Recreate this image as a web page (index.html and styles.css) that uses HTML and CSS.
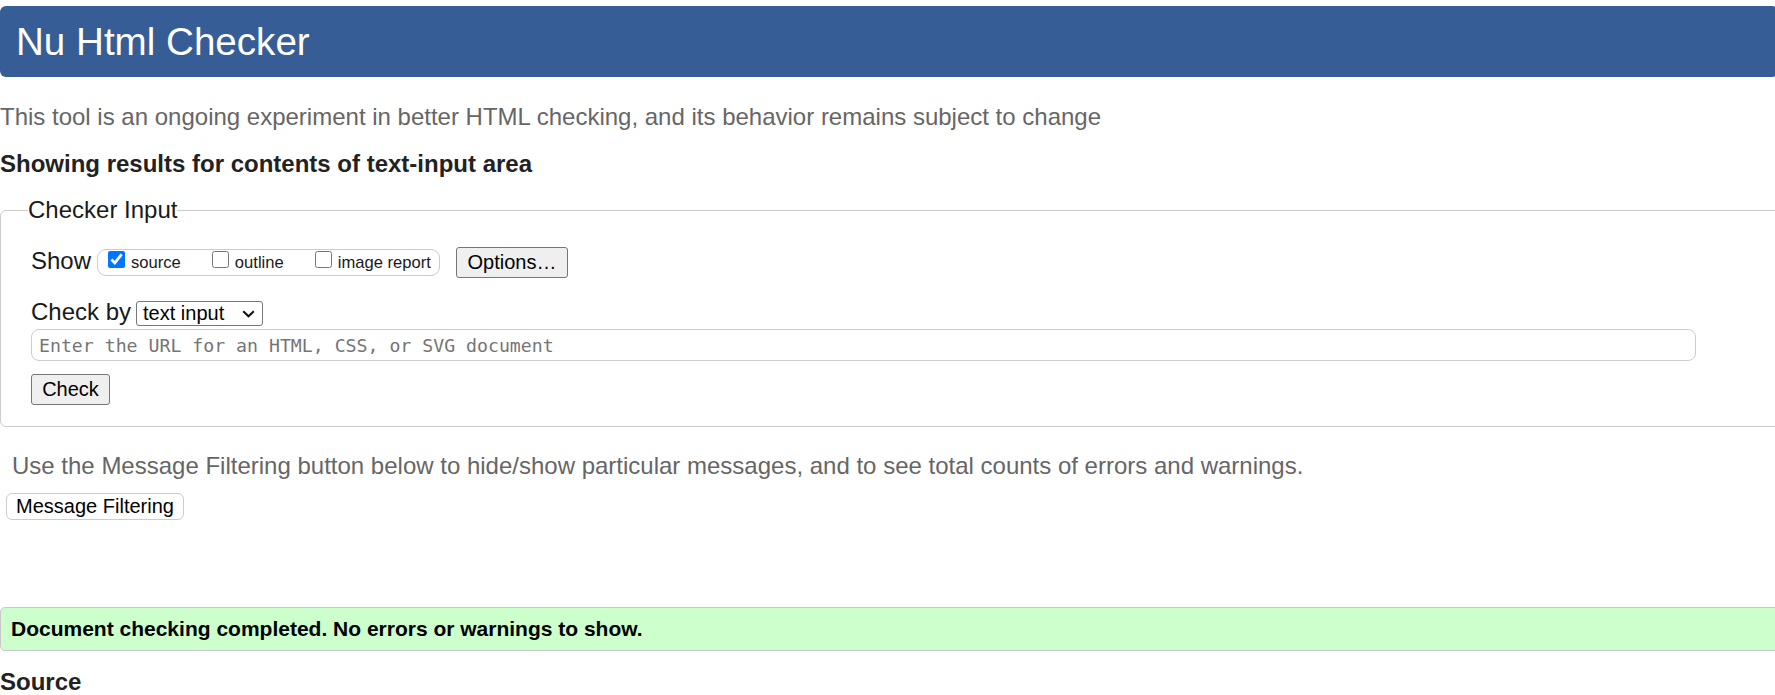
FILE: index.html
```html
<!DOCTYPE html>
<html lang="en">
<head>
<meta charset="utf-8">
<title>Nu Html Checker</title>
<link rel="stylesheet" href="styles.css">
</head>
<body>
<div class="page">
  <h1 class="masthead">Nu Html Checker</h1>
  <p class="intro">This tool is an ongoing experiment in better HTML checking, and its behavior remains subject to change</p>
  <h2 class="showing">Showing results for contents of text-input area</h2>

  <fieldset class="checker">
    <legend class="legend">Checker Input</legend>
    <div class="row row-show">
      <span class="label">Show</span>
      <div class="pill">
        <label class="opt"><input type="checkbox" class="cb" checked><span>source</span></label>
        <label class="opt"><input type="checkbox" class="cb"><span>outline</span></label>
        <label class="opt"><input type="checkbox" class="cb"><span>image report</span></label>
      </div>
      <button class="btn btn-options" type="button">Options…</button>
    </div>
    <div class="row row-check">
      <span class="label">Check by</span>
      <div class="select">
        <span class="select-text">text input</span>
        <svg class="chev" width="13" height="8" viewBox="0 0 13 8"><path d="M1.2 1.2 L6.5 6.3 L11.8 1.2" fill="none" stroke="#111" stroke-width="2"/></svg>
      </div>
    </div>
    <input class="url" type="text" placeholder="Enter the URL for an HTML, CSS, or SVG document">
    <button class="btn btn-check" type="button">Check</button>
  </fieldset>

  <p class="filter-note">Use the Message Filtering button below to hide/show particular messages, and to see total counts of errors and warnings.</p>
  <button class="btn-filter" type="button">Message Filtering</button>

  <div class="success">Document checking completed. No errors or warnings to show.</div>
  <h2 class="source">Source</h2>
</div>
</body>
</html>
```
FILE: styles.css
```css
html, body {
  margin: 0;
  padding: 0;
  overflow: hidden;
  background: #fff;
}
body {
  font-family: "Liberation Sans", Arial, sans-serif;
  color: #1a1a1a;
}
.page {
  overflow: hidden;
  padding-top: 6px;
  height: 689px;
}
.masthead {
  margin: 0 -3px 0 0;
  height: 71px;
  line-height: 71px;
  padding-left: 16px;
  font-size: 38.6px;
  font-weight: normal;
  color: #fff;
  background: #365d95;
  border-radius: 6px;
}
.intro {
  margin: 26px 0 0 0;
  font-size: 24px;
  line-height: 28px;
  color: #666;
  white-space: nowrap;
}
.showing {
  margin: 19px 0 0 0;
  font-size: 24px;
  line-height: 28px;
  font-weight: bold;
  color: #222;
}
.checker {
  margin: 18px -20px 0 0;
  padding: 23px 0 21px 30px;
  border: 1px solid #ccc;
  border-radius: 6px;
  min-width: 0;
}
.legend {
  margin-left: -3px;
  padding: 0;
  font-size: 24px;
  line-height: 28px;
  color: #1a1a1a;
}
.row {
  display: flex;
  align-items: center;
}
.row-show {
  height: 31px;
}
.label {
  font-size: 24px;
  line-height: 24px;
  margin-bottom: 3px;
  color: #1a1a1a;
}
.pill {
  display: flex;
  align-items: center;
  gap: 31px;
  box-sizing: border-box;
  height: 27px;
  margin-left: 6px;
  padding: 0 8px 0 10px;
  border: 1px solid #ccc;
  border-radius: 9px;
}
.opt {
  display: flex;
  align-items: center;
  gap: 6px;
  font-size: 16.6px;
  line-height: 24px;
  color: #1a1a1a;
}
.cb {
  width: 17px;
  height: 17px;
  margin: 0 0 7px 0;
  accent-color: #0075ff;
}
.btn {
  font-family: "Liberation Sans", Arial, sans-serif;
  font-size: 20px;
  color: #000;
  background: #efefef;
  border: 1px solid #767676;
  border-radius: 3px;
  padding: 0;
  box-sizing: border-box;
}
.btn-options {
  margin-left: 16px;
  width: 112px;
  height: 31px;
}
.row-check {
  margin-top: 23px;
  height: 25px;
  gap: 5px;
}
.select {
  display: flex;
  align-items: center;
  justify-content: space-between;
  box-sizing: border-box;
  width: 127px;
  height: 25px;
  padding: 0 7px 0 6px;
  border: 1px solid #767676;
  border-radius: 3px;
  font-size: 20px;
  line-height: 23px;
  color: #000;
}
.chev {
  display: block;
}
.url {
  display: block;
  box-sizing: border-box;
  margin-top: 3px;
  width: 1665px;
  height: 32px;
  padding: 0 7px;
  border: 1px solid #ccc;
  border-radius: 8px;
  font-family: "DejaVu Sans Mono", "Liberation Mono", monospace;
  font-size: 18.2px;
  color: #333;
  background: #fff;
  outline: none;
}
.url::placeholder {
  color: #757575;
}
.btn-check {
  display: block;
  margin-top: 13px;
  width: 79px;
  height: 31px;
}
.filter-note {
  margin: 25px 0 0 0;
  padding-left: 12px;
  font-size: 24px;
  line-height: 28px;
  color: #666;
  white-space: nowrap;
}
.btn-filter {
  display: block;
  margin: 13px 0 0 6px;
  box-sizing: border-box;
  width: 178px;
  height: 27px;
  padding: 0;
  font-family: "Liberation Sans", Arial, sans-serif;
  font-size: 20px;
  color: #000;
  background: #fff;
  border: 1px solid #ccc;
  border-radius: 6px;
}
.success {
  margin: 87px -20px 0 0;
  box-sizing: border-box;
  height: 44px;
  padding-left: 10px;
  line-height: 42px;
  font-size: 21px;
  font-weight: bold;
  color: #000;
  background: #ccffcc;
  border: 1px solid #c8c8c8;
  border-radius: 5px;
}
.source {
  margin: 17px 0 0 0;
  font-size: 24px;
  line-height: 28px;
  font-weight: bold;
  color: #222;
}
```
